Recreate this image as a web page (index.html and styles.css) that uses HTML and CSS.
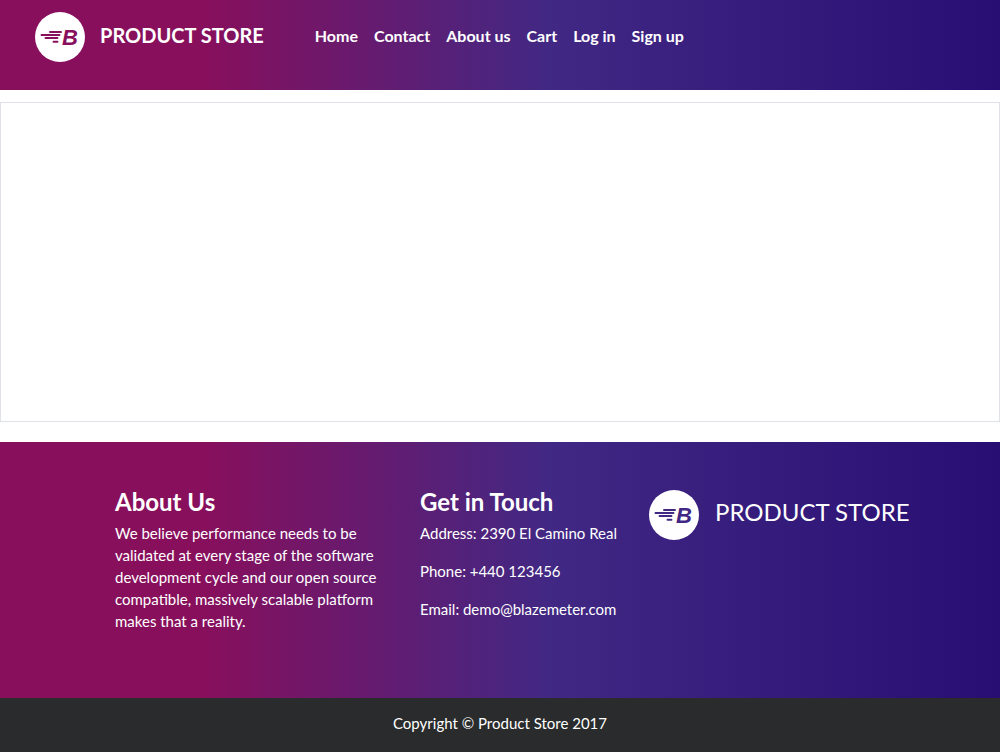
FILE: index.html
```
<!DOCTYPE html>
<html lang="en">
<head>
<meta charset="utf-8">
<meta name="viewport" content="width=device-width, initial-scale=1">
<title>STORE</title>
<link rel="stylesheet" href="styles.css">
</head>
<body>
<header class="navbar">
  <a class="brand" href="#">
    <svg class="logo" viewBox="0 0 50 50" aria-hidden="true">
      <circle cx="25" cy="25" r="25" fill="#fff"/>
      <path d="M15 20h11M6.500 23h18M10.500 26h12M18.500 29.700h4" stroke="currentColor" stroke-width="1.900" stroke-linecap="round"/>
      <text class="logo-letter" x="27" y="32.500">B</text>
    </svg>
    <span>PRODUCT STORE</span>
  </a>
  <nav>
    <ul class="menu">
      <li><a href="#">Home</a></li>
      <li><a href="#">Contact</a></li>
      <li><a href="#">About us</a></li>
      <li><a href="#">Cart</a></li>
      <li><a href="#">Log in</a></li>
      <li><a href="#">Sign up</a></li>
    </ul>
  </nav>
</header>
<main class="panel"></main>
<footer>
  <div class="info">
    <section class="about">
      <h2>About Us</h2>
      <p>We believe performance needs to be validated at every stage of the software development cycle and our open source compatible, massively scalable platform makes that a reality.</p>
    </section>
    <section>
      <h2>Get in Touch</h2>
      <p>Address: 2390 El Camino Real</p>
      <p>Phone: +440 123456</p>
      <p>Email: demo@blazemeter.com</p>
    </section>
    <div class="footer-brand">
      <svg class="logo" viewBox="0 0 50 50" aria-hidden="true">
        <circle cx="25" cy="25" r="25" fill="#fff"/>
        <path d="M15 20h11M6.500 23h18M10.500 26h12M18.500 29.700h4" stroke="currentColor" stroke-width="1.900" stroke-linecap="round"/>
        <text class="logo-letter" x="27" y="32.500">B</text>
      </svg>
      <span>PRODUCT STORE</span>
    </div>
  </div>
  <p class="copyright">Copyright © Product Store 2017</p>
</footer>
</body>
</html>
```
FILE: styles.css
```
* { box-sizing: border-box; }
body {
  margin: 0;
  background: #fff;
  color: #fff;
  font: 15px/22px Lato, sans-serif;
}
a { color: inherit; text-decoration: none; }
h2, p, ul { margin: 0; padding: 0; }
.navbar, .info {
  background: linear-gradient(to right, #880f5c 20%, #412884 55%, #280e73);
}
.navbar {
  display: flex;
  align-items: flex-start;
  gap: 51px;
  min-height: 90px;
  padding: 12px 35px;
}
.brand {
  display: flex;
  gap: 15px;
  font-size: 20px;
  font-weight: 700;
  line-height: 46px;
  white-space: nowrap;
}
.logo { flex: none; width: 50px; height: 50px; color: #880f5c; }
.logo-letter {
  fill: currentColor;
  font: italic 700 22px "Liberation Sans", sans-serif;
}
.menu {
  display: flex;
  flex-wrap: wrap;
  gap: 16px;
  list-style: none;
  font-size: 16px;
  font-weight: 700;
  line-height: 48px;
}
.panel {
  min-height: 320px;
  margin: 12px 0 20px;
  border: 1px solid #dee2e6;
}
.info {
  display: grid;
  grid-template-columns: 305fr 229fr 276fr;
  min-height: 256px;
  padding: 48px 75px 48px 115px;
}
.info h2 {
  margin-bottom: 8px;
  font-size: 24px;
  line-height: 24px;
}
.info p { margin-bottom: 16px; }
.about { padding-right: 36px; }
.footer-brand {
  display: flex;
  gap: 16px;
  font-size: 24px;
  line-height: 44px;
  white-space: nowrap;
}
.footer-brand .logo { color: #412884; }
.copyright {
  min-height: 54px;
  padding: 14px 0 16px;
  background: #292b2c;
  text-align: center;
}
```
